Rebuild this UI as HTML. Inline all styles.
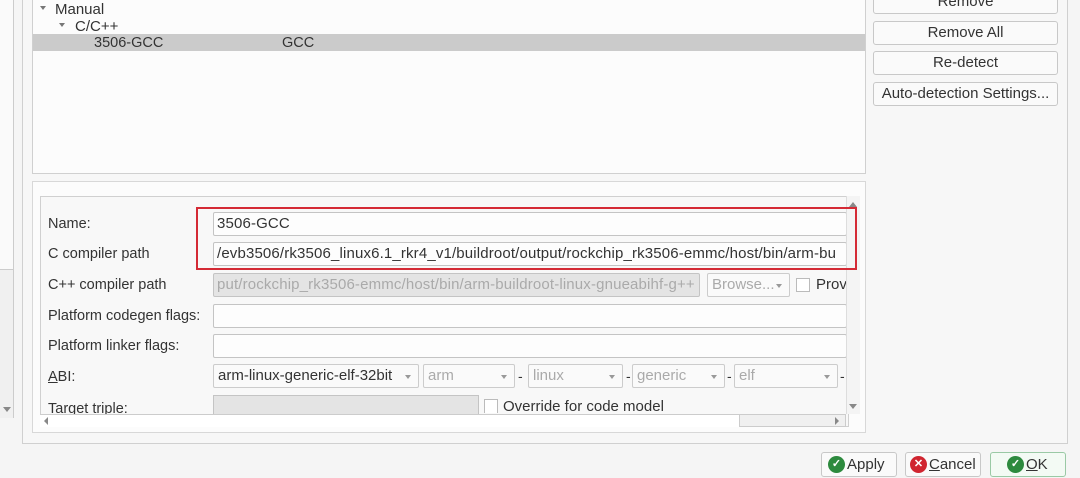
<!DOCTYPE html>
<html><head><style>
*{box-sizing:border-box;margin:0;padding:0}
body{width:1080px;height:478px;background:#f5f5f5;font-family:"Liberation Sans",sans-serif;font-size:14px;color:#333;position:relative;overflow:hidden}
.a{position:absolute}
.btn{position:absolute;border:1px solid #c8c8c8;border-radius:3px;background:#fafafa;text-align:center;line-height:22px;font-size:15px;color:#333}
.inp{position:absolute;border:1px solid #c4c4c4;border-radius:2px;background:#fdfdfd;height:24px;line-height:22px;padding-left:3px;overflow:hidden;white-space:nowrap;font-size:15px;letter-spacing:0.15px}
.dis{background:#e4e4e4;color:#aaa}
.lbl{position:absolute;left:48px;font-size:14.5px;color:#333}
.combo{position:absolute;border:1px solid #ccc;border-radius:2px;background:#fafafa;height:24px;line-height:22px;padding-left:4px;color:#aaa;font-size:15px;white-space:nowrap}
.combo:after{content:"";position:absolute;right:7px;top:10px;border-left:3.5px solid transparent;border-right:3.5px solid transparent;border-top:4px solid #999}
.bb{position:absolute;border:1px solid #c8c8c8;border-radius:3px;background:#fafafa;height:25px;font-size:15px;display:flex;align-items:center;color:#333}
.ic{display:inline-block;width:17px;height:17px;border-radius:50%;margin-right:2px;color:#fff;font-size:11px;line-height:17px;text-align:center;font-weight:bold}
</style></head><body>
<div class="a" style="left:0;top:0;width:14px;height:418px;border-right:1px solid #ccc;background:#f0f0f0"></div>
<div class="a" style="left:0;top:0;width:14px;height:270px;background:#fafafa;border-right:1px solid #ccc;border-bottom:1px solid #ccc"></div>
<div class="a" style="left:3px;top:407px;border-left:4px solid transparent;border-right:4px solid transparent;border-top:5px solid #888"></div>
<div class="a" style="left:22px;top:-2px;width:1046px;height:446px;border:1px solid #d0d0d0;background:#f7f7f7"></div>
<div class="a" style="left:32px;top:-2px;width:834px;height:176px;border:1px solid #d0d0d0;background:#fcfcfc"></div>
<div class="a" style="left:40px;top:6px;border-left:3.5px solid transparent;border-right:3.5px solid transparent;border-top:4px solid #777"></div>
<div class="a" style="left:55px;top:1px;font-size:15px">Manual</div>
<div class="a" style="left:59px;top:23px;border-left:3.5px solid transparent;border-right:3.5px solid transparent;border-top:4px solid #777"></div>
<div class="a" style="left:75px;top:18px;font-size:15px">C/C++</div>
<div class="a" style="left:33px;top:34px;width:832px;height:17px;background:#cbcbcb"></div>
<div class="a" style="left:94px;top:35px;font-size:14.5px">3506-GCC</div>
<div class="a" style="left:282px;top:35px;font-size:14.5px">GCC</div>
<div class="btn" style="left:873px;top:-10px;width:185px;height:24px">Remove</div>
<div class="btn" style="left:873px;top:21px;width:185px;height:24px">Remove All</div>
<div class="btn" style="left:873px;top:51px;width:185px;height:24px">Re-detect</div>
<div class="btn" style="left:873px;top:82px;width:185px;height:24px">Auto-detection Settings...</div>
<div class="a" style="left:32px;top:181px;width:834px;height:252px;border:1px solid #d8d8d8;background:#fcfcfc"></div>
<div class="a" style="left:40px;top:196px;width:809px;height:231px;border:1px solid #d0d0d0;background:#f8f8f8"></div>
<div class="lbl" style="top:216px">Name:</div>
<div class="inp" style="left:213px;top:212px;width:634px">3506-GCC</div>
<div class="lbl" style="top:246px">C compiler path</div>
<div class="inp" style="left:213px;top:242px;width:634px">/evb3506/rk3506_linux6.1_rkr4_v1/buildroot/output/rockchip_rk3506-emmc/host/bin/arm-bu</div>
<div class="lbl" style="top:277px">C++ compiler path</div>
<div class="inp dis" style="left:213px;top:273px;width:487px">put/rockchip_rk3506-emmc/host/bin/arm-buildroot-linux-gnueabihf-g++</div>
<div class="combo" style="left:707px;top:273px;width:83px">Browse...</div>
<div class="a" style="left:796px;top:278px;width:14px;height:14px;border:1px solid #bbb;background:#fff"></div>
<div class="a" style="left:816px;top:276px;font-size:15px">Prov</div>
<div class="lbl" style="top:308px">Platform codegen flags:</div>
<div class="inp" style="left:213px;top:304px;width:634px"></div>
<div class="lbl" style="top:338px">Platform linker flags:</div>
<div class="inp" style="left:213px;top:334px;width:634px"></div>
<div class="lbl" style="top:369px"><u>A</u>BI:</div>
<div class="combo" style="left:213px;top:364px;width:206px;color:#333">arm-linux-generic-elf-32bit</div>
<div class="combo" style="left:423px;top:364px;width:92px">arm</div>
<div class="a" style="left:518px;top:368px">-</div>
<div class="combo" style="left:528px;top:364px;width:95px">linux</div>
<div class="a" style="left:626px;top:368px">-</div>
<div class="combo" style="left:632px;top:364px;width:93px">generic</div>
<div class="a" style="left:727px;top:368px">-</div>
<div class="combo" style="left:734px;top:364px;width:104px">elf</div>
<div class="a" style="left:840px;top:368px">-</div>
<div class="lbl" style="top:399px;height:15px;overflow:hidden;line-height:20px">Target triple:</div>
<div class="a" style="left:213px;top:395px;width:266px;height:19px;border:1px solid #c4c4c4;border-bottom:none;background:#e4e4e4"></div>
<div class="a" style="left:484px;top:399px;width:14px;height:14px;border:1px solid #bbb;border-bottom:none;background:#fff"></div>
<div class="a" style="left:503px;top:397px;height:17px;overflow:hidden;line-height:20px;font-size:15px">Override for code model</div>
<div class="a" style="left:846px;top:196px;width:14px;height:218px;border-left:1px solid #ddd;background:#f4f4f4"></div>
<div class="a" style="left:849px;top:202px;border-left:4px solid transparent;border-right:4px solid transparent;border-bottom:5px solid #888"></div>
<div class="a" style="left:849px;top:404px;border-left:4px solid transparent;border-right:4px solid transparent;border-top:5px solid #888"></div>
<div class="a" style="left:40px;top:414px;width:806px;height:13px;border-top:1px solid #ccc;background:#fff"></div>
<div class="a" style="left:739px;top:414px;width:107px;height:13px;border:1px solid #ccc;background:#f0f0f0"></div>
<div class="a" style="left:44px;top:417px;border-top:4px solid transparent;border-bottom:4px solid transparent;border-right:4px solid #888"></div>
<div class="a" style="left:835px;top:417px;border-top:4px solid transparent;border-bottom:4px solid transparent;border-left:4px solid #888"></div>
<div class="a" style="left:196px;top:207px;width:661px;height:63px;border:2.5px solid #d42a35"></div>
<div class="bb" style="left:821px;top:452px;width:76px;padding-left:6px"><span class="ic" style="background:#2d8a3e">✓</span>Apply</div>
<div class="bb" style="left:905px;top:452px;width:76px;padding-left:4px"><span class="ic" style="background:#d02530">✕</span><u>C</u>ancel</div>
<div class="bb" style="left:990px;top:452px;width:76px;padding-left:16px;border-color:#9ac9a5;background:#f3faf4"><span class="ic" style="background:#2d8a3e">✓</span><u>O</u>K</div>
</body></html>
